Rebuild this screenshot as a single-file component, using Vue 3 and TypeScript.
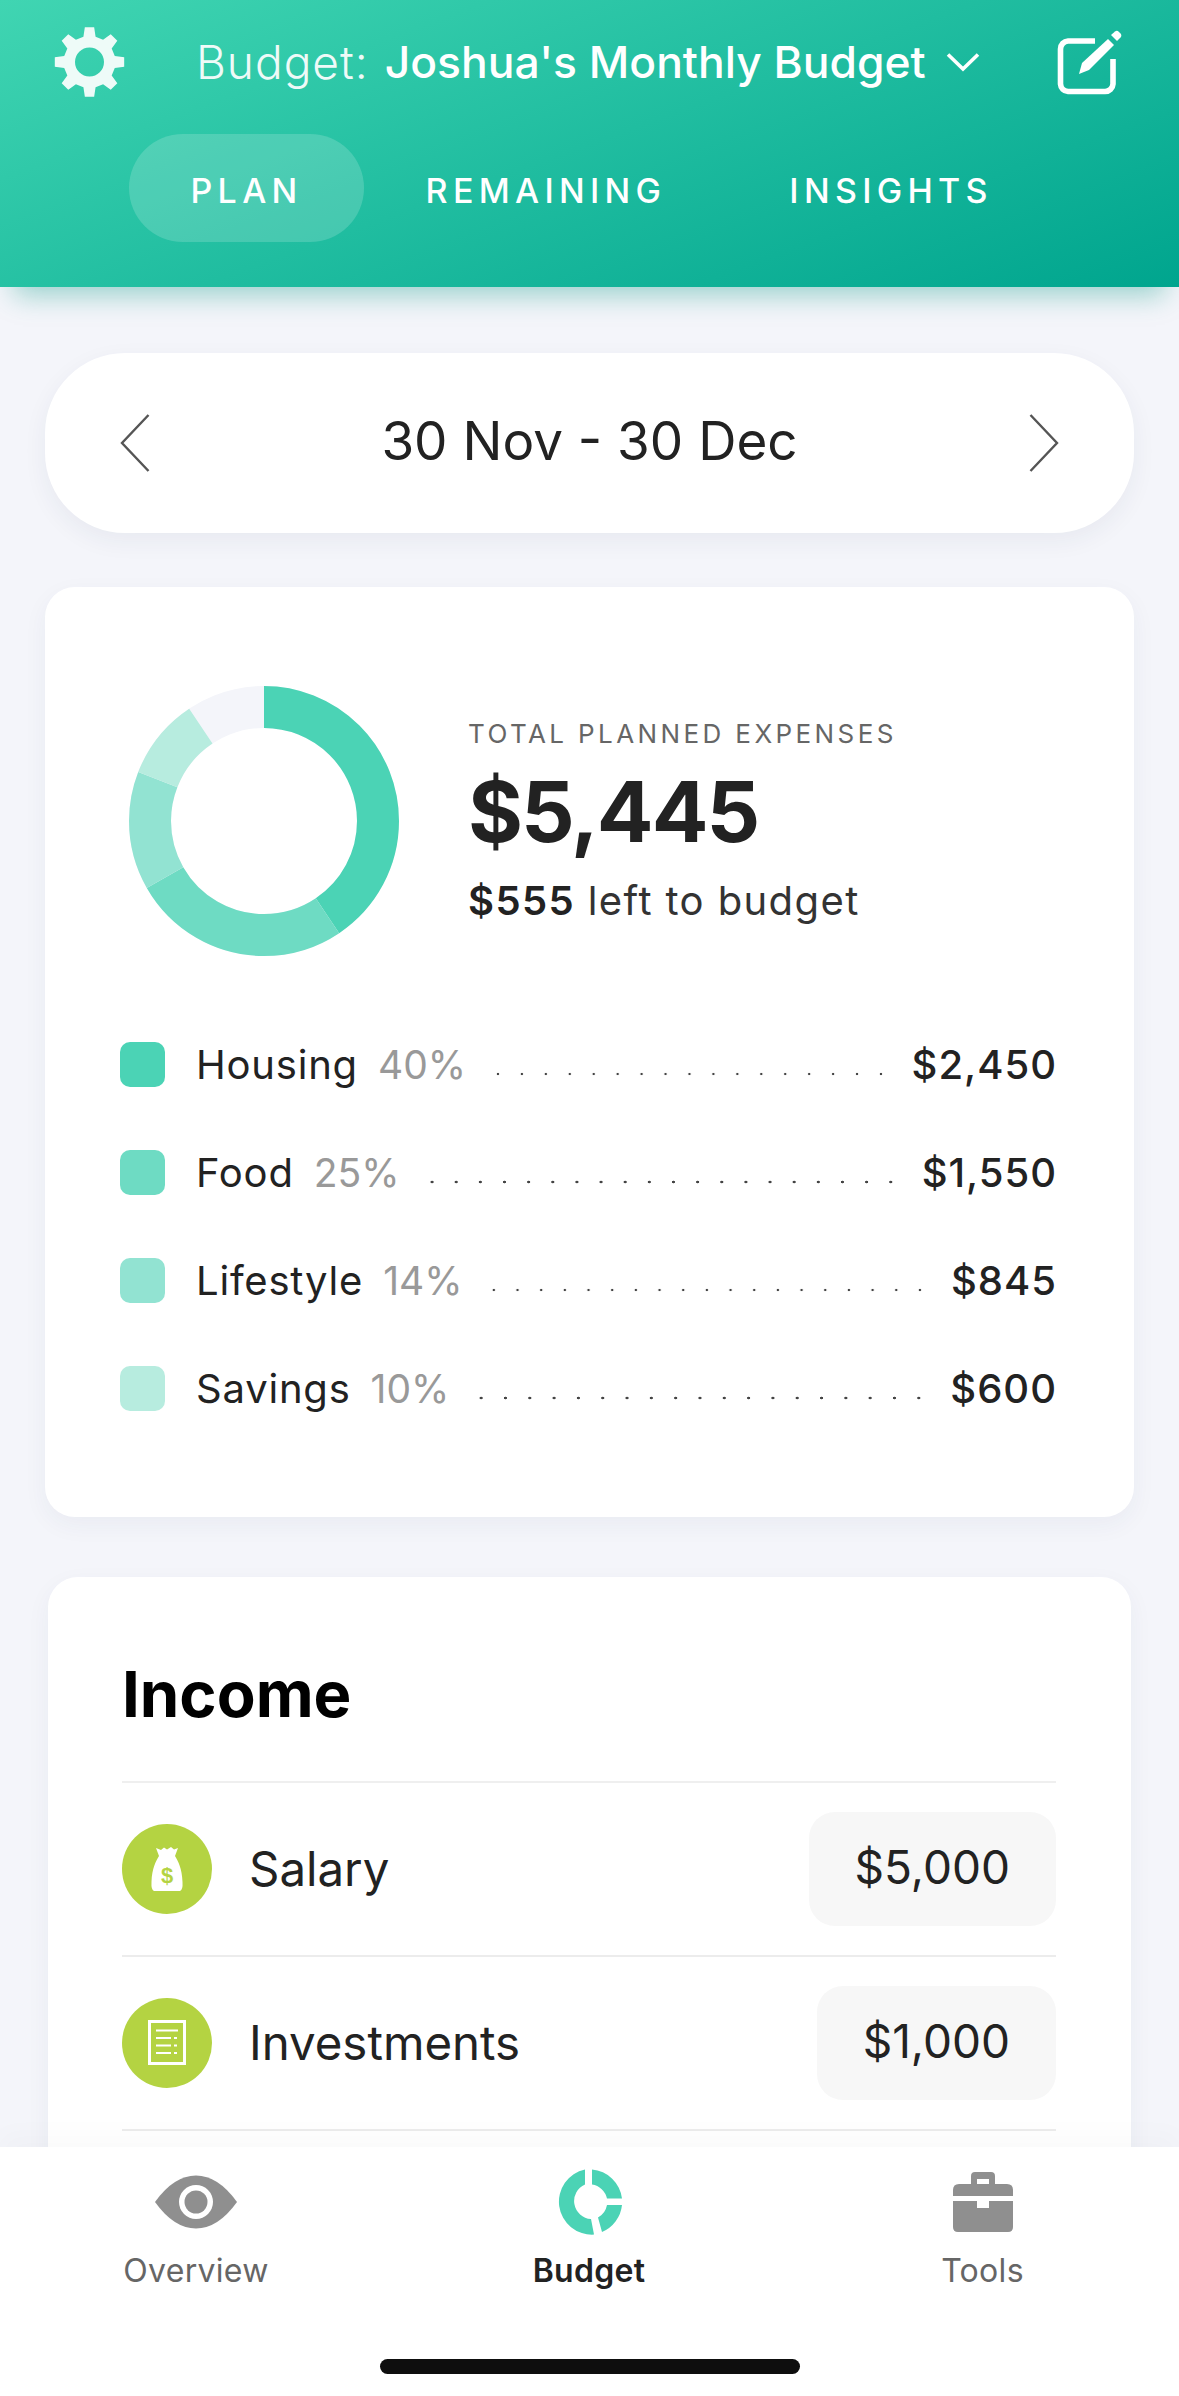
<template>
  <div class="screen">
    <header class="top">
      <div class="top-row">
        <svg class="gear" viewBox="0 0 70 70">
          <path :d="gearPath" fill="#eefbf8" fill-rule="evenodd" />
        </svg>
        <div class="budget-name">
          <span class="budget-label">Budget:</span>
          <span class="budget-value">Joshua's Monthly Budget</span>
          <svg class="caret" viewBox="0 0 34 20">
            <path d="M2 2.5 L17 17 L32 2.5" fill="none" stroke="#fff" stroke-width="3.6" />
          </svg>
        </div>
        <svg class="edit" viewBox="0 0 65 65">
          <path
            d="M38 11 H11 A8 8 0 0 0 3.5 19 V54 A8 8 0 0 0 11 61.5 H48 A8 8 0 0 0 56 54 V29"
            fill="none"
            stroke="#fff"
            stroke-width="5.6"
          />
          <path d="M22 44 L25 33 L51 9 L57 15 L32 40 Z" fill="#fff" />
          <path d="M54 5 L58 1.5 Q60 0 62 2 L64 4 Q65 6 63.5 7.5 L60 11 Z" fill="#fff" />
        </svg>
      </div>
      <nav class="tabs">
        <span v-for="tab in tabs" :key="tab" :class="['tab', { active: tab === 'PLAN' }]">{{ tab }}</span>
      </nav>
    </header>

    <main class="content">
      <div class="period">
        <svg class="arrow" viewBox="0 0 30 58">
          <path d="M28.5 1 L2 29 L28.5 57" fill="none" stroke="#555" stroke-width="2.4" />
        </svg>
        <span class="period-text">30 Nov - 30 Dec</span>
        <svg class="arrow" viewBox="0 0 30 58">
          <path d="M1.5 1 L28 29 L1.5 57" fill="none" stroke="#555" stroke-width="2.4" />
        </svg>
      </div>

      <section class="card summary-card">
        <div class="summary">
          <svg class="donut" viewBox="0 0 270 270">
            <circle cx="135" cy="135" r="114" fill="none" stroke="#f4f5fa" stroke-width="42" />
            <circle
              v-for="seg in donutSegments"
              :key="seg.color"
              cx="135"
              cy="135"
              r="114"
              fill="none"
              :stroke="seg.color"
              stroke-width="42"
              :stroke-dasharray="seg.dash"
              :stroke-dashoffset="seg.offset"
              transform="rotate(-90 135 135)"
            />
          </svg>
          <div class="totals">
            <div class="totals-label">TOTAL PLANNED EXPENSES</div>
            <div class="totals-amount">$5,445</div>
            <div class="totals-left"><b>$555</b> left to budget</div>
          </div>
        </div>
        <ul class="legend">
          <li v-for="item in legend" :key="item.name" class="legend-row">
            <span class="swatch" :style="{ background: item.color }"></span>
            <span class="legend-name">{{ item.name }}</span>
            <span class="legend-pct">{{ item.pct }}</span>
            <span class="leader"></span>
            <span class="legend-amount">{{ item.amount }}</span>
          </li>
        </ul>
      </section>

      <section class="card income-card">
        <h2 class="income-title">Income</h2>
        <div class="income-row">
          <svg class="round-icon" viewBox="0 0 90 90">
            <circle cx="45" cy="45" r="45" fill="#b4d342" />
            <path
              d="M34 24 L39 26 L42 23.5 L45 25.5 L49 23 L52 25.5 L56 24 L53 32 C56 37 60 44 60.5 58 Q61 66 58 67 H32 Q29 66 29.5 58 C30 44 34 37 37 32 Z"
              fill="#fff"
            />
            <text x="45" y="59" class="bag-dollar">$</text>
          </svg>
          <span class="income-name">Salary</span>
          <span class="income-value">$5,000</span>
        </div>
        <div class="income-row">
          <svg class="round-icon" viewBox="0 0 90 90">
            <circle cx="45" cy="45" r="45" fill="#b4d342" />
            <rect x="27.5" y="23.5" width="35" height="42" fill="none" stroke="#fff" stroke-width="3" />
            <path
              d="M34 32.5 H56 M34 40 H49 M52 40 H55 M34 47.5 H49 M52 47.5 H55 M34 55 H49 M52 55 H55"
              stroke="#fff"
              stroke-width="2"
            />
          </svg>
          <span class="income-name">Investments</span>
          <span class="income-value">$1,000</span>
        </div>
        <div class="income-row"></div>
      </section>
    </main>

    <footer class="tabbar">
      <div class="tabbar-items">
        <div class="bar-item">
          <svg class="bar-icon" viewBox="0 0 84 66">
            <path d="M1 33 Q20 6.5 42 6.5 Q64 6.5 83 33 Q64 59.5 42 59.5 Q20 59.5 1 33 Z" fill="#8f8f8f" />
            <circle cx="42" cy="33" r="17" fill="#fff" />
            <circle cx="42" cy="33" r="11.5" fill="#8f8f8f" />
          </svg>
          <span class="bar-label">Overview</span>
        </div>
        <div class="bar-item current">
          <svg class="bar-icon" viewBox="0 0 84 66">
            <path
              d="M38 0.4 A33 33 0 0 0 47 65.6 L44 50 A18 18 0 0 1 38 15.5 Z M45 0.5 V15.5 A18 18 0 0 1 60 29.5 H75 A33 33 0 0 0 45 0.5 Z M75 36 H60 A18 18 0 0 1 51 48.5 L55 63 A33 33 0 0 0 75 36 Z"
              fill="#4bd3b5"
            />
          </svg>
          <span class="bar-label">Budget</span>
        </div>
        <div class="bar-item">
          <svg class="bar-icon" viewBox="0 0 84 66">
            <path
              d="M30 15 V7 Q30 3 34 3 H50 Q54 3 54 7 V15 H48 V10 H36 V15 Z"
              fill="#8f8f8f"
            />
            <path d="M18 15 H66 Q72 15 72 21 V27 H12 V21 Q12 15 18 15 Z" fill="#8f8f8f" />
            <path d="M12 32 H36 V39 H48 V32 H72 V58 Q72 63 67 63 H17 Q12 63 12 58 Z" fill="#8f8f8f" />
          </svg>
          <span class="bar-label">Tools</span>
        </div>
      </div>
      <div class="home-bar"></div>
    </footer>
  </div>
</template>

<script setup lang="ts">
import { computed } from 'vue'

interface LegendItem {
  name: string
  pct: string
  amount: string
  color: string
}

const tabs = ['PLAN', 'REMAINING', 'INSIGHTS']

const legend: LegendItem[] = [
  { name: 'Housing', pct: '40%', amount: '$2,450', color: '#4bd3b5' },
  { name: 'Food', pct: '25%', amount: '$1,550', color: '#6edbc3' },
  { name: 'Lifestyle', pct: '14%', amount: '$845', color: '#92e3d2' },
  { name: 'Savings', pct: '10%', amount: '$600', color: '#b7ecdf' }
]

// slice ends measured on the ring, in degrees clockwise from the top
const sliceAngles = [0, 146, 240, 291, 326]

const donutSegments = computed(() => {
  const len = 2 * Math.PI * 114
  return legend.map((item, i) => {
    const from = (sliceAngles[i] / 360) * len
    const to = (sliceAngles[i + 1] / 360) * len
    return { color: item.color, dash: `${to - from} ${len}`, offset: -from }
  })
})

const gearPath = computed(() => {
  const cx = 35
  const cy = 35
  const teeth = 8
  const pts: string[] = []
  for (let i = 0; i < teeth; i++) {
    const a = (i / teeth) * Math.PI * 2 - Math.PI / 2
    const step = (Math.PI * 2) / teeth
    const corners: [number, number][] = [
      [26, a - step * 0.3],
      [35, a - step * 0.17],
      [35, a + step * 0.17],
      [26, a + step * 0.3]
    ]
    for (const [r, t] of corners) {
      pts.push(`${(cx + r * Math.cos(t)).toFixed(2)} ${(cy + r * Math.sin(t)).toFixed(2)}`)
    }
  }
  const hole = 'M49.5 35 A14.5 14.5 0 1 0 20.5 35 A14.5 14.5 0 1 0 49.5 35 Z'
  return `M${pts.join(' L')} Z ${hole}`
})
</script>

<style>
html,
body {
  margin: 0;
  background: #f4f5fa;
}
</style>

<style scoped>
.screen {
  width: 1179px;
  height: 2396px;
  display: flex;
  flex-direction: column;
  overflow: hidden;
  background: #f4f5fa;
  font-family: Inter, "Liberation Sans", sans-serif;
  color: #222;
}

.top {
  position: relative;
  z-index: 2;
  flex-shrink: 0;
  height: 287px;
  box-sizing: border-box;
  padding-top: 27px;
  background: linear-gradient(160deg, #40d5b2 0%, #00a58e 100%);
  box-shadow: 0 22px 26px -14px rgba(0, 150, 130, 0.38);
}

.top-row {
  display: flex;
  align-items: center;
  height: 70px;
  padding: 0 57px 0 54px;
}

.gear {
  width: 71px;
  height: 70px;
}

.budget-name {
  display: flex;
  align-items: center;
  margin-left: 71px;
  color: #fff;
  font-size: 44.4px;
}

.budget-label {
  font-size: 46px;
  font-weight: 300;
  letter-spacing: 1px;
  opacity: 0.92;
}

.budget-value {
  margin-left: 16px;
  font-weight: 500;
}

.caret {
  width: 34px;
  height: 20px;
  margin-left: 20px;
}

.edit {
  width: 65px;
  height: 65px;
  margin-left: auto;
}

.tabs {
  display: flex;
  margin: 37px 0 0 129px;
}

.tab {
  height: 108px;
  line-height: 114px;
  padding: 0 61.5px;
  border-radius: 54px;
  color: #fff;
  font-size: 34px;
  font-weight: 500;
  letter-spacing: 5.3px;
}

.tab.active {
  background: rgba(255, 255, 255, 0.17);
}

.content {
  flex: 1;
  min-height: 0;
  overflow: hidden;
  padding: 66px 45px 0;
}

.period {
  height: 180px;
  display: flex;
  align-items: center;
  justify-content: space-between;
  padding: 0 75px;
  background: #fff;
  border-radius: 80px;
  box-shadow: 0 8px 24px rgba(40, 50, 90, 0.06);
}

.arrow {
  width: 30px;
  height: 58px;
}

.period-text {
  margin-bottom: 5px;
  font-size: 53px;
  font-weight: 400;
  color: #222;
}

.card {
  background: #fff;
  border-radius: 30px;
  box-shadow: 0 8px 24px rgba(40, 50, 90, 0.05);
}

.summary-card {
  margin-top: 54px;
  padding-bottom: 106px;
}

.summary {
  display: flex;
  align-items: center;
  gap: 69px;
  padding: 99px 0 0 84px;
}

.donut {
  width: 270px;
  height: 270px;
  flex-shrink: 0;
}

.totals-label {
  margin-top: 2px;
  font-size: 26px;
  line-height: 30px;
  letter-spacing: 3.4px;
  color: #666;
}

.totals-amount {
  margin-top: 13px;
  font-size: 84px;
  line-height: 100px;
  font-weight: 700;
  letter-spacing: -2px;
  color: #222;
}

.totals-left {
  margin-top: 14px;
  font-size: 40px;
  line-height: 50px;
  letter-spacing: 1.4px;
  color: #333;
}

.totals-left b {
  font-weight: 600;
  color: #222;
}

.legend {
  list-style: none;
  margin: 0;
  padding: 86px 77px 0 75px;
  display: flex;
  flex-direction: column;
  gap: 63px;
}

.legend-row {
  display: flex;
  align-items: center;
  height: 45px;
  font-size: 40px;
}

.swatch {
  width: 45px;
  height: 45px;
  border-radius: 10px;
  flex-shrink: 0;
  margin-right: 31px;
}

.legend-name {
  color: #222;
  letter-spacing: 0.8px;
}

.legend-pct {
  margin-left: 20px;
  font-size: 39px;
  color: #999;
}

.leader {
  flex: 1;
  height: 4px;
  margin: 18px 19px 0 20px;
  background-image: radial-gradient(circle, #444 1.2px, transparent 1.6px);
  background-size: 24px 4px;
  background-repeat: round;
}

.legend-amount {
  font-weight: 500;
  letter-spacing: 1px;
  color: #222;
}

.income-card {
  margin: 60px 3px 0;
  padding: 0 75px 0 74px;
}

.income-title {
  margin: 0;
  height: 206px;
  box-sizing: border-box;
  padding-top: 82px;
  font-size: 63.5px;
  line-height: 70px;
  font-weight: 700;
  color: #000;
  border-bottom: 2px solid #efefef;
}

.income-row {
  display: flex;
  align-items: center;
  height: 174px;
  box-sizing: border-box;
  border-bottom: 2px solid #ececec;
}

.round-icon {
  width: 90px;
  height: 90px;
  flex-shrink: 0;
}

.bag-dollar {
  font-family: "Liberation Sans", sans-serif;
  font-size: 22px;
  font-weight: 700;
  fill: #b4d342;
  text-anchor: middle;
}

.income-name {
  margin-bottom: 2px;
  margin-left: 37px;
  font-size: 47.4px;
  color: #222;
}

.income-value {
  margin-left: auto;
  height: 114px;
  line-height: 110px;
  padding: 0 46px;
  border-radius: 26px;
  background: #f7f7f7;
  font-size: 46px;
  color: #222;
}

.tabbar {
  position: relative;
  z-index: 2;
  flex-shrink: 0;
  height: 249px;
  box-sizing: border-box;
  background: #fff;
  box-shadow: 0 -14px 24px rgba(0, 0, 0, 0.02);
}

.tabbar-items {
  display: grid;
  grid-template-columns: 392px 394px 393px;
  padding-top: 22px;
}

.bar-item {
  display: flex;
  flex-direction: column;
  align-items: center;
}

.bar-icon {
  width: 84px;
  height: 66px;
}

.bar-label {
  margin-top: 16px;
  font-size: 32px;
  line-height: 40px;
  letter-spacing: 0.3px;
  color: #666;
}

.bar-item.current .bar-label {
  color: #222;
  font-weight: 600;
}

.home-bar {
  width: 420px;
  height: 15px;
  margin: 68px auto 0;
  border-radius: 8px;
  background: #0e0e0e;
}
</style>
